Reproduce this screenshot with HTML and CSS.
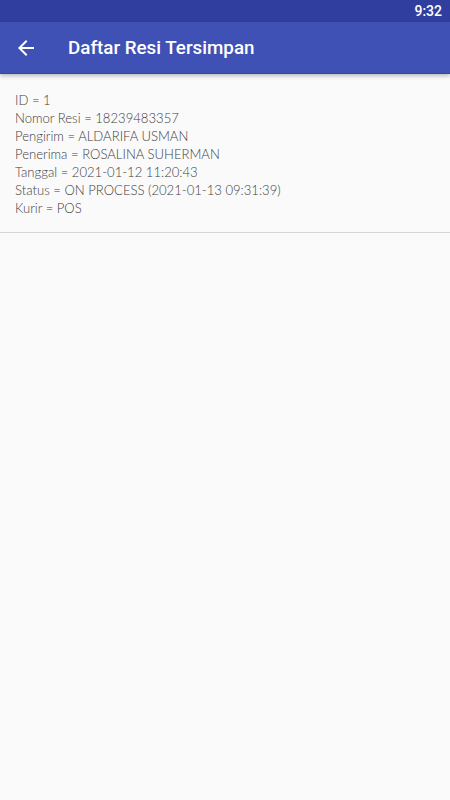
FILE: index.html
```html
<!DOCTYPE html>
<html lang="id">
<head>
    <meta charset="UTF-8">
    <meta name="viewport" content="width=device-width, initial-scale=1.0">
    <title>Daftar Resi Tersimpan</title>
    <link rel="stylesheet" href="styles.css">
</head>
<body>

<div class="status-bar">
    <span class="clock">9:32</span>
</div>

<div class="toolbar">
    <svg class="back-icon" width="24" height="24" viewBox="0 0 24 24">
        <path d="M20 11H7.83l5.59-5.59L12 4l-8 8 8 8 1.41-1.41L7.83 13H20v-2z" fill="#ffffff"/>
    </svg>
    <h1 class="toolbar-title">Daftar Resi Tersimpan</h1>
</div>

<div class="list">
    <div class="resi-item">
        <p>ID = 1</p>
        <p>Nomor Resi = 18239483357</p>
        <p>Pengirim = ALDARIFA USMAN</p>
        <p>Penerima = ROSALINA SUHERMAN</p>
        <p>Tanggal = 2021-01-12 11:20:43</p>
        <p>Status = ON PROCESS (2021-01-13 09:31:39)</p>
        <p>Kurir = POS</p>
    </div>
</div>

</body>
</html>
```

FILE: styles.css
```css
body {
    margin: 0;
    background-color: #fafafa;
    font-family: Roboto, "Liberation Sans", sans-serif;
    height: 800px;
}
.status-bar {
    height: 22px;
    background-color: #303f9f;
    display: flex;
    justify-content: flex-end;
    align-items: center;
    padding-right: 8px;
}
.clock {
    color: white;
    font-size: 14px;
    font-weight: 500;
}
.toolbar {
    height: 51px;
    background-color: #3f51b5;
    border-bottom: 1px solid #2c45c0;
    display: flex;
    align-items: center;
    box-shadow: 0 2px 4px rgba(0, 0, 0, 0.25);
    position: relative;
}
.back-icon {
    margin-left: 14px;
    width: 24px;
    height: 24px;
}
.toolbar-title {
    margin: 0 0 0 30px;
    color: white;
    font-size: 18.8px;
    font-weight: 500;
}
.resi-item {
    padding: 17px 15px 15px 15px;
    border-bottom: 1px solid #d6d6d6;
}
.resi-item p {
    margin: 0;
    font-family: Lato, "Open Sans", sans-serif;
    font-weight: 300;
    font-size: 13.1px;
    line-height: 18px;
    color: #404040;
}
```
